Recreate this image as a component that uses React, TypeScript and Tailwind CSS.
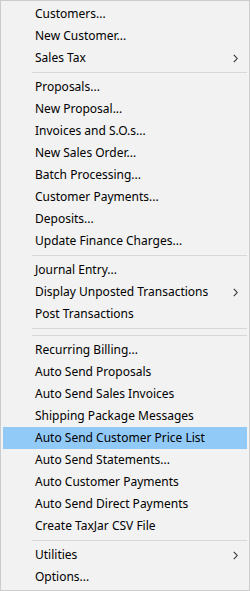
import React from "react";

type Entry = { label: string; sub?: boolean; active?: boolean } | "sep";

const items: Entry[] = [
  { label: "Customers..." },
  { label: "New Customer..." },
  { label: "Sales Tax", sub: true },
  "sep",
  { label: "Proposals..." },
  { label: "New Proposal..." },
  { label: "Invoices and S.O.s..." },
  { label: "New Sales Order..." },
  { label: "Batch Processing..." },
  { label: "Customer Payments..." },
  { label: "Deposits..." },
  { label: "Update Finance Charges..." },
  "sep",
  { label: "Journal Entry..." },
  { label: "Display Unposted Transactions", sub: true },
  { label: "Post Transactions" },
  "sep",
  "sep",
  { label: "Recurring Billing..." },
  { label: "Auto Send Proposals" },
  { label: "Auto Send Sales Invoices" },
  { label: "Shipping Package Messages" },
  { label: "Auto Send Customer Price List", active: true },
  { label: "Auto Send Statements..." },
  { label: "Auto Customer Payments" },
  { label: "Auto Send Direct Payments" },
  { label: "Create TaxJar CSV File" },
  "sep",
  { label: "Utilities", sub: true },
  { label: "Options..." },
];

function Chevron() {
  return (
    <svg width="5" height="9" viewBox="0 0 5 9" className="shrink-0">
      <path d="M0.8 0.8 L4.2 4.5 L0.8 8.2" fill="none" stroke="#333" strokeWidth="1.1" />
    </svg>
  );
}

export default function App() {
  return (
    <div className="w-[250px] h-[591px] bg-[#f2f2f2] border border-[#cccccc] px-[2px] py-[2px] flex flex-col text-[12px] text-black font-['Noto_Sans',sans-serif]">
      {items.map((it, i) =>
        it === "sep" ? (
          <div key={i} className="h-[7px] flex items-center pl-[29px] pr-0 shrink-0">
            <div className="h-px w-full bg-[#d7d7d7]" />
          </div>
        ) : (
          <div
            key={i}
            className={
              "h-[22px] shrink-0 flex items-center pl-[32px] pr-[9px] " +
              (it.active ? "bg-[#91c9f7]" : "")
            }
          >
            <span className="flex-1 leading-none whitespace-nowrap">{it.label}</span>
            {it.sub && <Chevron />}
          </div>
        )
      )}
    </div>
  );
}
